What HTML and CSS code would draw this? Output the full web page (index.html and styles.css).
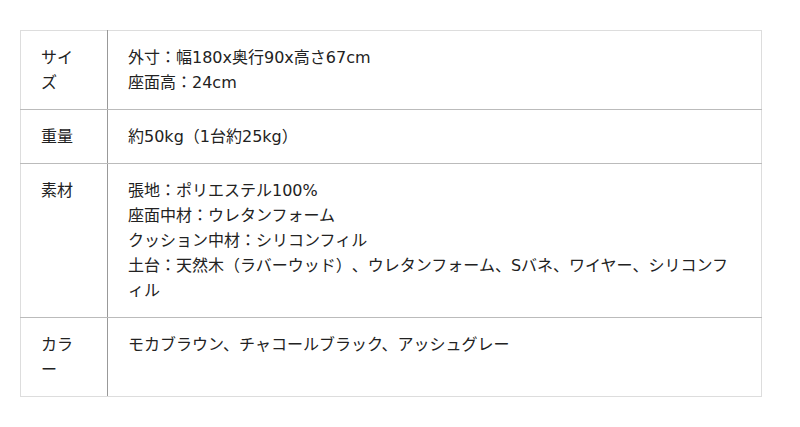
FILE: index.html
```html
<!DOCTYPE html>
<html lang="ja">
<head>
<meta charset="utf-8">
<link rel="stylesheet" href="styles.css">
</head>
<body>
<table class="spec">
  <tr>
    <th>サイズ</th>
    <td>外寸：幅180x奥行90x高さ67cm<br>座面高：24cm</td>
  </tr>
  <tr>
    <th>重量</th>
    <td>約50kg（1台約25kg）</td>
  </tr>
  <tr>
    <th>素材</th>
    <td>張地：ポリエステル100%<br>座面中材：ウレタンフォーム<br>クッション中材：シリコンフィル<br>土台：天然木（ラバーウッド）、ウレタンフォーム、Sバネ、ワイヤー、シリコンフィル</td>
  </tr>
  <tr>
    <th>カラー</th>
    <td>モカブラウン、チャコールブラック、アッシュグレー</td>
  </tr>
</table>
</body>
</html>
```
FILE: styles.css
```css
body {
  margin: 0;
  padding: 30px 38px 0 20px;
  background: #fff;
  font-family: "DejaVu Sans", "Noto Sans CJK JP", sans-serif;
  font-size: 16px;
  color: #222;
  text-spacing-trim: space-all;
}
.spec {
  width: 742px;
  border-collapse: collapse;
  border: 1px solid #ddd;
}
.spec th,
.spec td {
  padding: 14px 20px 14px;
  line-height: 25px;
  text-align: left;
  vertical-align: top;
  font-weight: normal;
  border-top: 1px solid #bbb;
  border-bottom: 1px solid #bbb;
}
.spec tr:first-child th,
.spec tr:first-child td {
  border-top-color: #ddd;
}
.spec tr:last-child th,
.spec tr:last-child td {
  border-bottom-color: #ddd;
}
.spec th {
  width: 46px;
  border-right: 1px solid #999;
}
.spec td {
  border-right: 1px solid #ddd;
}
```
